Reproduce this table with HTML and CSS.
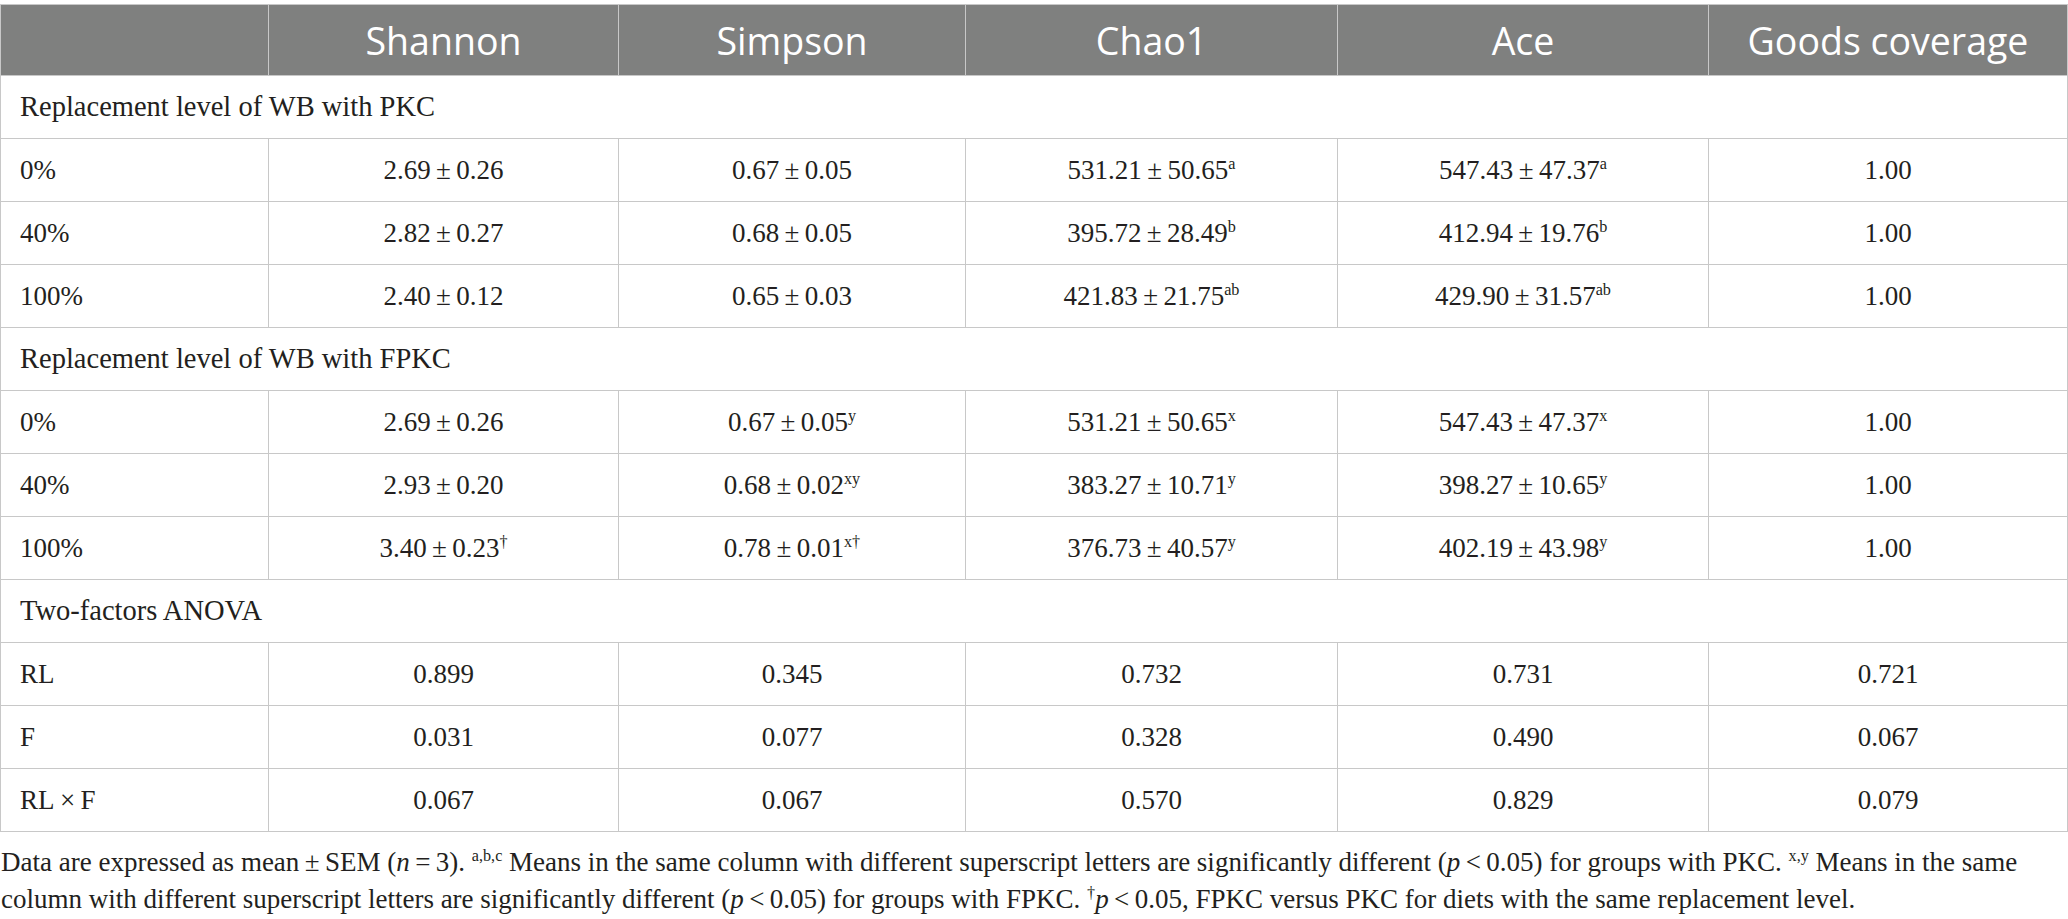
FILE: index.html
```html
<!DOCTYPE html>
<html lang="en">
<head>
    <meta charset="UTF-8">
    <title>Alpha diversity</title>
    <link rel="stylesheet" href="styles.css">
</head>
<body>
    <table class="data">
        <colgroup>
            <col class="c-label">
            <col class="c-shannon">
            <col class="c-simpson">
            <col class="c-chao">
            <col class="c-ace">
            <col class="c-goods">
        </colgroup>
        <thead>
            <tr>
                <th></th>
                <th>Shannon</th>
                <th>Simpson</th>
                <th>Chao1</th>
                <th>Ace</th>
                <th>Goods coverage</th>
            </tr>
        </thead>
        <tbody>
            <tr class="section"><td colspan="6">Replacement level of WB with PKC</td></tr>
            <tr>
                <td>0%</td>
                <td>2.69&thinsp;±&thinsp;0.26</td>
                <td>0.67&thinsp;±&thinsp;0.05</td>
                <td>531.21&thinsp;±&thinsp;50.65<sup>a</sup></td>
                <td>547.43&thinsp;±&thinsp;47.37<sup>a</sup></td>
                <td>1.00</td>
            </tr>
            <tr>
                <td>40%</td>
                <td>2.82&thinsp;±&thinsp;0.27</td>
                <td>0.68&thinsp;±&thinsp;0.05</td>
                <td>395.72&thinsp;±&thinsp;28.49<sup>b</sup></td>
                <td>412.94&thinsp;±&thinsp;19.76<sup>b</sup></td>
                <td>1.00</td>
            </tr>
            <tr>
                <td>100%</td>
                <td>2.40&thinsp;±&thinsp;0.12</td>
                <td>0.65&thinsp;±&thinsp;0.03</td>
                <td>421.83&thinsp;±&thinsp;21.75<sup>ab</sup></td>
                <td>429.90&thinsp;±&thinsp;31.57<sup>ab</sup></td>
                <td>1.00</td>
            </tr>
            <tr class="section"><td colspan="6">Replacement level of WB with FPKC</td></tr>
            <tr>
                <td>0%</td>
                <td>2.69&thinsp;±&thinsp;0.26</td>
                <td>0.67&thinsp;±&thinsp;0.05<sup>y</sup></td>
                <td>531.21&thinsp;±&thinsp;50.65<sup>x</sup></td>
                <td>547.43&thinsp;±&thinsp;47.37<sup>x</sup></td>
                <td>1.00</td>
            </tr>
            <tr>
                <td>40%</td>
                <td>2.93&thinsp;±&thinsp;0.20</td>
                <td>0.68&thinsp;±&thinsp;0.02<sup>xy</sup></td>
                <td>383.27&thinsp;±&thinsp;10.71<sup>y</sup></td>
                <td>398.27&thinsp;±&thinsp;10.65<sup>y</sup></td>
                <td>1.00</td>
            </tr>
            <tr>
                <td>100%</td>
                <td>3.40&thinsp;±&thinsp;0.23<sup>†</sup></td>
                <td>0.78&thinsp;±&thinsp;0.01<sup>x†</sup></td>
                <td>376.73&thinsp;±&thinsp;40.57<sup>y</sup></td>
                <td>402.19&thinsp;±&thinsp;43.98<sup>y</sup></td>
                <td>1.00</td>
            </tr>
            <tr class="section"><td colspan="6">Two-factors ANOVA</td></tr>
            <tr>
                <td>RL</td>
                <td>0.899</td>
                <td>0.345</td>
                <td>0.732</td>
                <td>0.731</td>
                <td>0.721</td>
            </tr>
            <tr>
                <td>F</td>
                <td>0.031</td>
                <td>0.077</td>
                <td>0.328</td>
                <td>0.490</td>
                <td>0.067</td>
            </tr>
            <tr>
                <td>RL&thinsp;×&thinsp;F</td>
                <td>0.067</td>
                <td>0.067</td>
                <td>0.570</td>
                <td>0.829</td>
                <td>0.079</td>
            </tr>
        </tbody>
    </table>

    <p class="note">Data are expressed as mean&thinsp;±&thinsp;SEM (<i>n</i>&thinsp;=&thinsp;3). <sup>a,b,c</sup> Means in the same column with different superscript letters are significantly different (<i>p</i>&thinsp;&lt;&thinsp;0.05) for groups with PKC. <sup>x,y</sup> Means in the same column with different superscript letters are significantly different (<i>p</i>&thinsp;&lt;&thinsp;0.05) for groups with FPKC. <sup>†</sup><i>p</i>&thinsp;&lt;&thinsp;0.05, FPKC versus PKC for diets with the same replacement level.</p>
</body>
</html>
```

FILE: styles.css
```css
body {
    margin: 0;
    padding-top: 4px;
    background: #fff;
    color: #231f20;
    font-family: "Liberation Serif", "Times New Roman", serif;
}
.data {
    width: 2067px;
    border-collapse: collapse;
    table-layout: fixed;
    font-size: 27px;
}
.c-label { width: 268px; }
.c-shannon { width: 350px; }
.c-simpson { width: 347px; }
.c-chao { width: 372px; }
.c-ace { width: 371px; }
.c-goods { width: 359px; }

.data th,
.data td {
    border: 1px solid #c8c8c8;
    padding: 0 10px;
    text-align: center;
    white-space: nowrap;
}
.data th {
    height: 69px;
    padding-top: 1px;
    background: #7f807f;
    color: #fff;
    font-family: "Open Sans", "Noto Sans", sans-serif;
    font-weight: normal;
    font-size: 37.5px;
    line-height: 1.2;
}
.data td {
    height: 62px;
}
.data td:first-child {
    text-align: left;
    padding-left: 19px;
}
.section td {
    font-size: 28.5px;
}
.data sup {
    font-size: 0.6em;
    line-height: 0;
    vertical-align: 0.6em;
}
.note {
    margin: 12px 0 0;
    padding-left: 1px;
    font-size: 27px;
    line-height: 37px;
}
.note sup {
    font-size: 0.6em;
    line-height: 0;
    vertical-align: 0.6em;
}
```
